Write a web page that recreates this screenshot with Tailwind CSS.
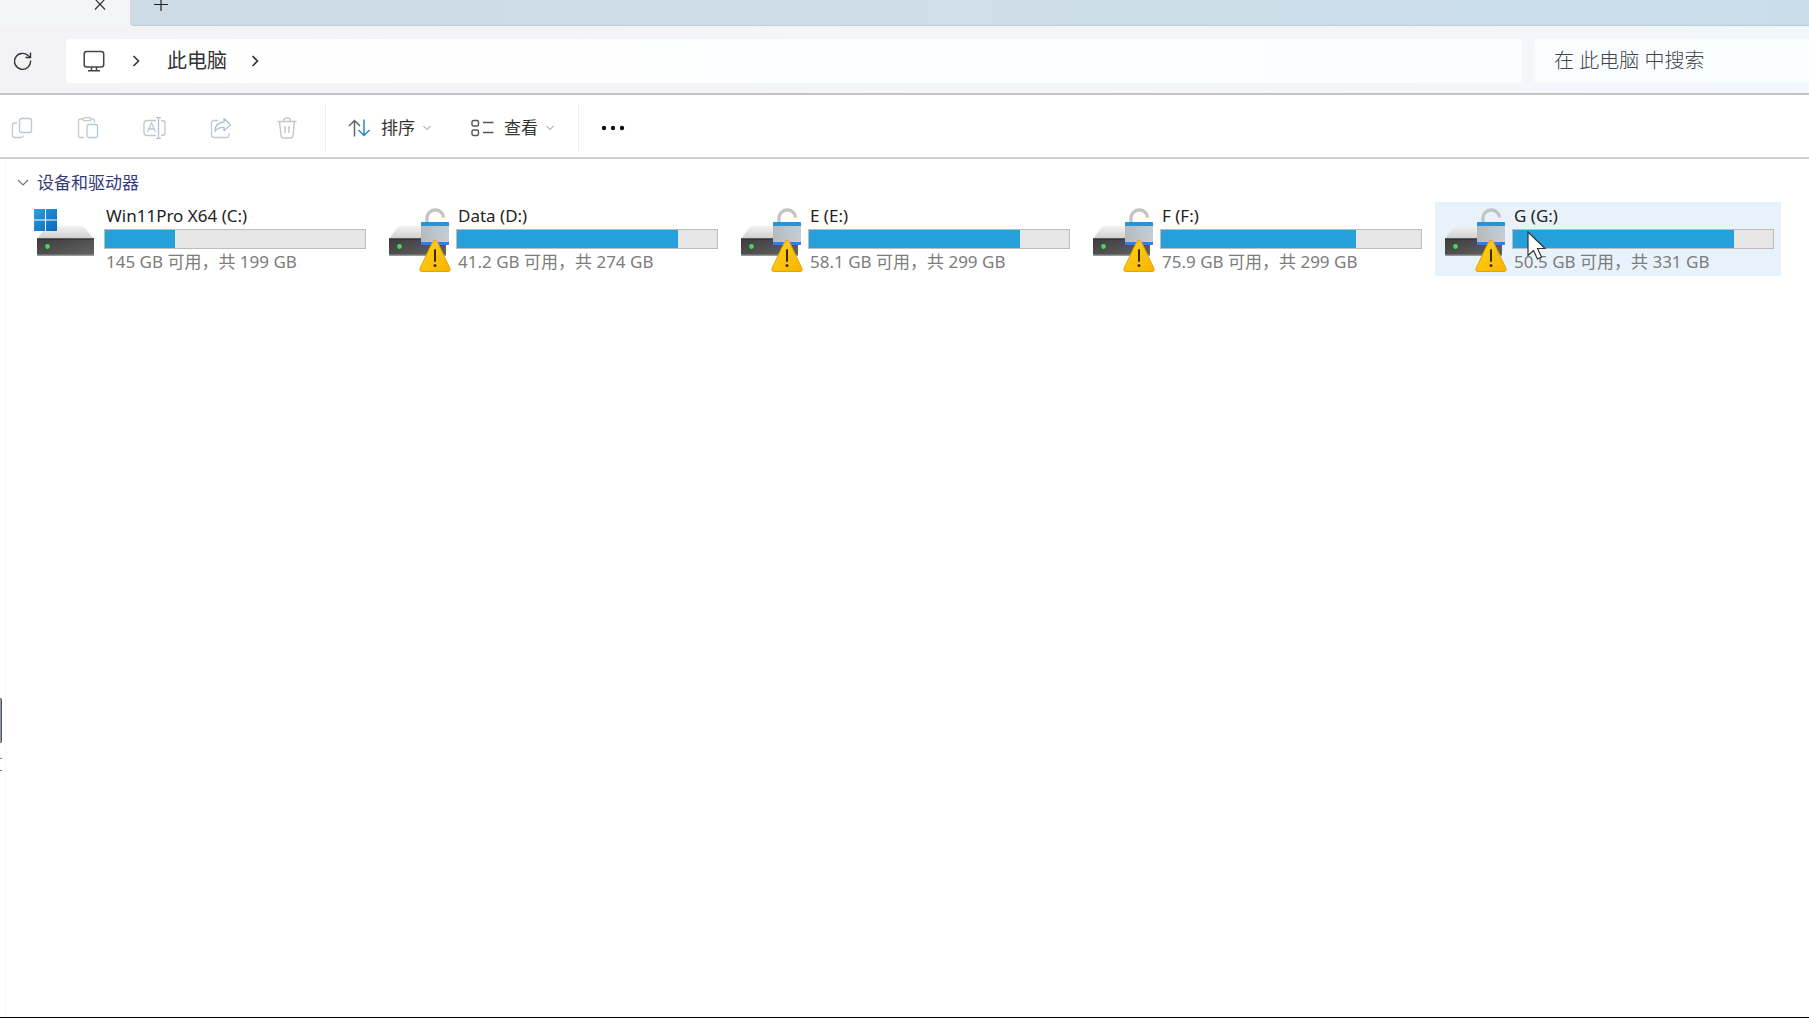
<!DOCTYPE html>
<html lang="zh-CN">
<head>
<meta charset="utf-8">
<title>此电脑</title>
<script src="https://cdn.jsdelivr.net/npm/@tailwindcss/browser@4"></script>
</head>
<body class="flex min-h-screen flex-col border-b border-black bg-white font-['Noto_Sans','Noto_Sans_CJK_SC',sans-serif] text-[17px] leading-6 text-[#222]">
<svg class="absolute size-0" aria-hidden="true">
  <defs>
    <linearGradient id="top" x1="0" y1="0" x2="0" y2="1"><stop offset="0" stop-color="#f1f1f1"/><stop offset="1" stop-color="#cfcfcf"/></linearGradient>
    <linearGradient id="front" x1="0" y1="0" x2="1" y2="1"><stop offset="0" stop-color="#3c3c3c"/><stop offset="1" stop-color="#646464"/></linearGradient>
    <linearGradient id="win" x1="0" y1="0" x2="1" y2="1"><stop offset="0" stop-color="#2ba0e0"/><stop offset="1" stop-color="#0a66b8"/></linearGradient>
    <linearGradient id="lock" x1="0" y1="0" x2="1" y2="0"><stop offset="0" stop-color="#b4babf"/><stop offset="1" stop-color="#c9cdd1"/></linearGradient>
    <linearGradient id="warn" x1="0" y1="0" x2="1" y2="1"><stop offset="0" stop-color="#ffd21c"/><stop offset="1" stop-color="#f7b500"/></linearGradient>
    <symbol id="disk" viewBox="0 0 60 70">
      <path d="M14 24h31q3 0 5 2l9 11H2l8-11q1.500-2 4-2z" fill="url(#top)"/>
      <path d="M2 36.500h57v16q0 1-1 1H3q-1 0-1-1z" fill="url(#front)"/>
      <path d="M2 37h57" stroke="#2a2a2a"/><path d="M2 53h57" stroke="#8a8a8a"/>
      <circle cx="12.500" cy="44.500" r="2.400" fill="#3fdc4c"/>
    </symbol>
    <symbol id="locked" viewBox="0 0 64 70">
      <use href="#disk" width="60" height="70"/>
      <path d="M40 21v-5a8 8 0 0 1 8-8h1A8 8 0 0 1 56.500 15.500" fill="none" stroke="#c2c4c6" stroke-width="3.400"/>
      <rect x="34" y="20" width="28" height="23" rx="1" fill="url(#lock)"/>
      <path d="M34 21q0-1 1-1h26q1 0 1 1v3H34z" fill="#2593d8"/>
      <path d="M34 40h28v2q0 1-1 1H35q-1 0-1-1z" fill="#2d82dc"/>
    </symbol>
    <symbol id="alert" viewBox="0 0 32 33">
      <path d="M13.500 2.200q2.500-3.600 5 0L31 28.500q1 3-2 3H3q-3 0-2-3z" fill="url(#warn)" stroke="#e2a300"/>
      <path d="M16 10v11" stroke="#3a2c00" stroke-width="2" stroke-linecap="round"/><circle cx="16" cy="25.500" r="1.500" fill="#3a2c00"/>
    </symbol>
  </defs>
</svg>

<header>
  <div class="flex h-[26px] overflow-hidden bg-[#f4f5f8]">
    <div class="flex w-[130px] shrink-0 justify-end pr-6">
      <button aria-label="关闭标签页" class="h-3"><svg width="12" height="12" viewBox="0 0 12 12" fill="none" stroke="#333" stroke-width="1.200"><path d="M1-1l10 10.500M11-1L1 9.500"/></svg></button>
    </div>
    <div class="flex grow rounded-bl border-b border-[#bccad2] bg-linear-to-r from-[#cddbe7] via-[#cfdee9] to-[#c8dfea] pl-6">
      <button aria-label="新建标签页" class="h-3"><svg width="14" height="12" viewBox="0 0 14 12" stroke="#222" stroke-width="1.200"><path d="M7-2v13M0 4.500h14"/></svg></button>
    </div>
  </div>
  <div class="flex h-[69px] items-center border-b-2 border-[#c4c4c6] bg-linear-to-r from-[#f3f3f5] via-[#f4f5f8] to-[#f2f7fb] pt-0.5">
    <button aria-label="刷新" class="flex w-[66px] pl-3.5"><svg width="18" height="20" viewBox="0 0 18 20" fill="none" stroke="#333" stroke-width="1.400"><path d="M16.500 9.500A8 8 0 1 1 14 4.500l2.500 2"/><path d="M16.500 1.500v5h-5"/></svg></button>
    <nav aria-label="地址" class="flex h-11 grow items-center rounded bg-linear-to-r from-white to-[#fbfdff] pl-[17px] text-[20px] text-[#333]">
      <a href="#" aria-label="桌面"><svg width="22" height="22" viewBox="0 0 22 22" fill="none" stroke="#444" stroke-width="1.500"><rect x="1.200" y="1.500" width="19.500" height="15.500" rx="2.500"/><path d="M8.500 17v3.500M13.500 17v3.500M5 20.700h12"/></svg></a>
      <svg class="ml-[27px]" width="8" height="12" viewBox="0 0 8 12" fill="none" stroke="#333" stroke-width="1.600"><path d="M1.500 1l5 5-5 5"/></svg>
      <a href="#" class="ml-[27px]">此电脑</a>
      <svg class="ml-6" width="8" height="12" viewBox="0 0 8 12" fill="none" stroke="#333" stroke-width="1.600"><path d="M1.500 1l5 5-5 5"/></svg>
    </nav>
    <input type="search" aria-label="搜索" placeholder="在 此电脑 中搜索" class="ml-3 h-11 w-[275px] rounded-l bg-[#f9fdff] pl-5 text-[20px] font-light text-[#444] outline-none placeholder:text-[#444]">
  </div>
  <div class="flex h-16 items-center border-b-2 border-[#cfcfcf] bg-white pt-1">
    <div class="flex h-12 items-center gap-11 border-r border-[#f0f0f0] pr-[27px] pl-[11px]">
      <button disabled aria-label="复制"><svg width="22" height="22" viewBox="0 0 22 22" fill="none" stroke="#bcc6d2" stroke-width="1.300"><rect x="8.500" y="1.500" width="12" height="14" rx="2" stroke="#b3cadb"/><path d="M6 6H3.500q-2 0-2 2v10.500q0 2 2 2H10q2 0 2.500-2" stroke="#c8c8cb"/></svg></button>
      <button disabled aria-label="粘贴"><svg width="22" height="22" viewBox="0 0 22 22" fill="none" stroke="#c8c8cb" stroke-width="1.300"><path d="M7 20.500H3.500q-2 0-2-2V4q0-2 2-2H6M14 2h1.500q2 0 2 2v1.500"/><rect x="6" y=".700" width="8" height="3" rx="1.500"/><rect x="10" y="7.500" width="10.500" height="13" rx="1.500" stroke="#b3cadb"/></svg></button>
      <button disabled aria-label="重命名"><svg width="23" height="22" viewBox="0 0 23 22" fill="none" stroke="#c2c6cc" stroke-width="1.300"><path d="M13 3.500H4q-3 0-3 3v9q0 3 3 3h9M18 3.500h1q3 0 3 3v9q0 3-3 3h-1"/><path d="M4.500 15L8.500 6l4 9M6 12h5"/><path d="M15.500 1v20M13 .700h5M13 21.300h5" stroke="#b0c2d4"/></svg></button>
      <button disabled aria-label="共享"><svg width="22" height="22" viewBox="0 0 22 22" fill="none" stroke="#c8c8cb" stroke-width="1.300"><path d="M8 3.500H4q-2.500 0-2.500 2.500v12q0 2.500 2.500 2.500h12.500q2.500 0 2.500-2.500v-2"/><path d="M14 1.500l6.500 6.200-6.500 6.200v-3.500q-6-.400-9 3.800 0-8.500 9-9.200z" stroke="#b0bfd8" stroke-linejoin="round"/></svg></button>
      <button disabled aria-label="删除"><svg width="22" height="22" viewBox="0 0 22 22" fill="none" stroke="#c6c6c9" stroke-width="1.400"><path d="M1.500 4.500h19M3.500 4.500l1.500 14q.200 2.500 2.500 2.500h7q2.300 0 2.500-2.500l1.500-14M7.500 4q0-3 3.500-3t3.500 3M9 9v7M13 9v7"/></svg></button>
    </div>
    <div class="flex h-12 items-center gap-10 border-r border-[#f0f0f0] pr-6 pl-[22px] text-[#333]">
      <button class="flex items-center"><svg width="23" height="18" viewBox="0 0 23 18" fill="none" stroke="#666" stroke-width="1.500"><path d="M6.500 17.500V1.500M1 7l5.500-5.500L12 7"/><path d="M16 .500v16M10.500 11l5.500 5.500L21.500 11" stroke="#2f86cf"/></svg><span class="ml-2.5">排序</span><svg class="ml-2" width="8" height="6" viewBox="0 0 8 6" fill="none" stroke="#888"><path d="M.500 1L4 4.500 7.500 1"/></svg></button>
      <button class="flex items-center"><svg width="23" height="18" viewBox="0 0 23 18" fill="none" stroke="#555" stroke-width="1.400"><rect x="1" y="1.500" width="6.500" height="5.500" rx="1.500"/><rect x="1" y="11" width="6.500" height="5.500" rx="1.500"/><path d="M12 3.500h10.500M12 13.500h10.500"/></svg><span class="ml-2.5">查看</span><svg class="ml-2" width="8" height="6" viewBox="0 0 8 6" fill="none" stroke="#888"><path d="M.500 1L4 4.500 7.500 1"/></svg></button>
    </div>
    <button aria-label="更多" class="ml-[22px]"><svg width="24" height="6" viewBox="0 0 24 6" fill="#111"><circle cx="3" cy="3" r="2.200"/><circle cx="12" cy="3" r="2.200"/><circle cx="21" cy="3" r="2.200"/></svg></button>
  </div>
</header>

<div class="flex grow">
  <aside class="w-[6px] shrink-0 overflow-hidden border-r border-[#f8f8f8] pt-[539px]">
    <div class="h-[45px] w-0.5 rounded-r border border-l-0 border-[#4d5660] bg-[#8d99a5]"></div>
    <div class="mt-[15px] h-[13px] w-0.5 border-y border-[#777]"></div>
  </aside>
  <main class="grow pt-[13px] pl-[21px]">
    <details open>
      <summary class="-ml-[10px] flex h-[22px] w-fit list-none items-center text-[#333b7c]"><svg width="12" height="8" viewBox="0 0 12 8" fill="none" stroke="#777" stroke-width="1.200"><path d="M1 1l5 5 5-5"/></svg><span class="ml-2">设备和驱动器</span></summary>
      <ul id="drives" class="mt-2 grid grid-cols-[repeat(auto-fill,346px)] gap-[6px]"></ul>
    </details>
  </main>
</div>

<template id="tile">
  <li class="relative flex h-[74px] pl-2">
    <svg class="icon h-[72px] w-[60px] overflow-visible" viewBox="0 0 60 72"></svg>
    <div class="ml-[9px] w-[262px]">
      <p class="name pt-px pl-0.5 text-[17px] leading-[26px] whitespace-nowrap text-[#222]"></p>
      <div class="h-5 border border-[#bcbcbc] bg-[#e6e6e6]"><div class="fill h-full bg-[#26a0da]"></div></div>
      <p class="info pl-0.5 text-[17px] leading-[26px] whitespace-nowrap text-[#7c7c7c]"></p>
    </div>
  </li>
</template>
<template id="pointer">
  <svg class="absolute top-[29px] left-[92px]" width="20" height="30" viewBox="0 0 20 30"><path d="M1 1v23.500l5.500-5 4 8.500 4-2-4-8.500H18z" fill="#fff" stroke="#333" stroke-width="1.200"/></svg>
</template>
<script>
const drives = [
  { name: 'Win11Pro X64 (C:)', info: '145 GB 可用，共 199 GB', used: 27, system: true },
  { name: 'Data (D:)', info: '41.2 GB 可用，共 274 GB', used: 85 },
  { name: 'E (E:)', info: '58.1 GB 可用，共 299 GB', used: 81 },
  { name: 'F (F:)', info: '75.9 GB 可用，共 299 GB', used: 75 },
  { name: 'G (G:)', info: '50.5 GB 可用，共 331 GB', used: 85, hover: true },
];
const winIcon = '<use href="#disk" width="60" height="70"/><path d="M-1 7h11v10.500H-1zM11 7h11v10.500H11zM-1 18.500h11V29H-1zM11 18.500h11V29H11z" fill="url(#win)"/>';
const lockIcon = '<use href="#locked" width="64" height="70"/><use href="#alert" x="32" y="38" width="32" height="33"/>';
for (const d of drives) {
  const li = document.getElementById('tile').content.cloneNode(true).firstElementChild;
  li.querySelector('.icon').innerHTML = d.system ? winIcon : lockIcon;
  li.querySelector('.name').textContent = d.name;
  li.querySelector('.info').textContent = d.info;
  li.querySelector('.fill').style.width = d.used + '%';
  if (d.hover) {
    li.classList.add('bg-[#e8f2fb]');
    li.append(document.getElementById('pointer').content.cloneNode(true));
  }
  document.getElementById('drives').append(li);
}
</script>
</body>
</html>
